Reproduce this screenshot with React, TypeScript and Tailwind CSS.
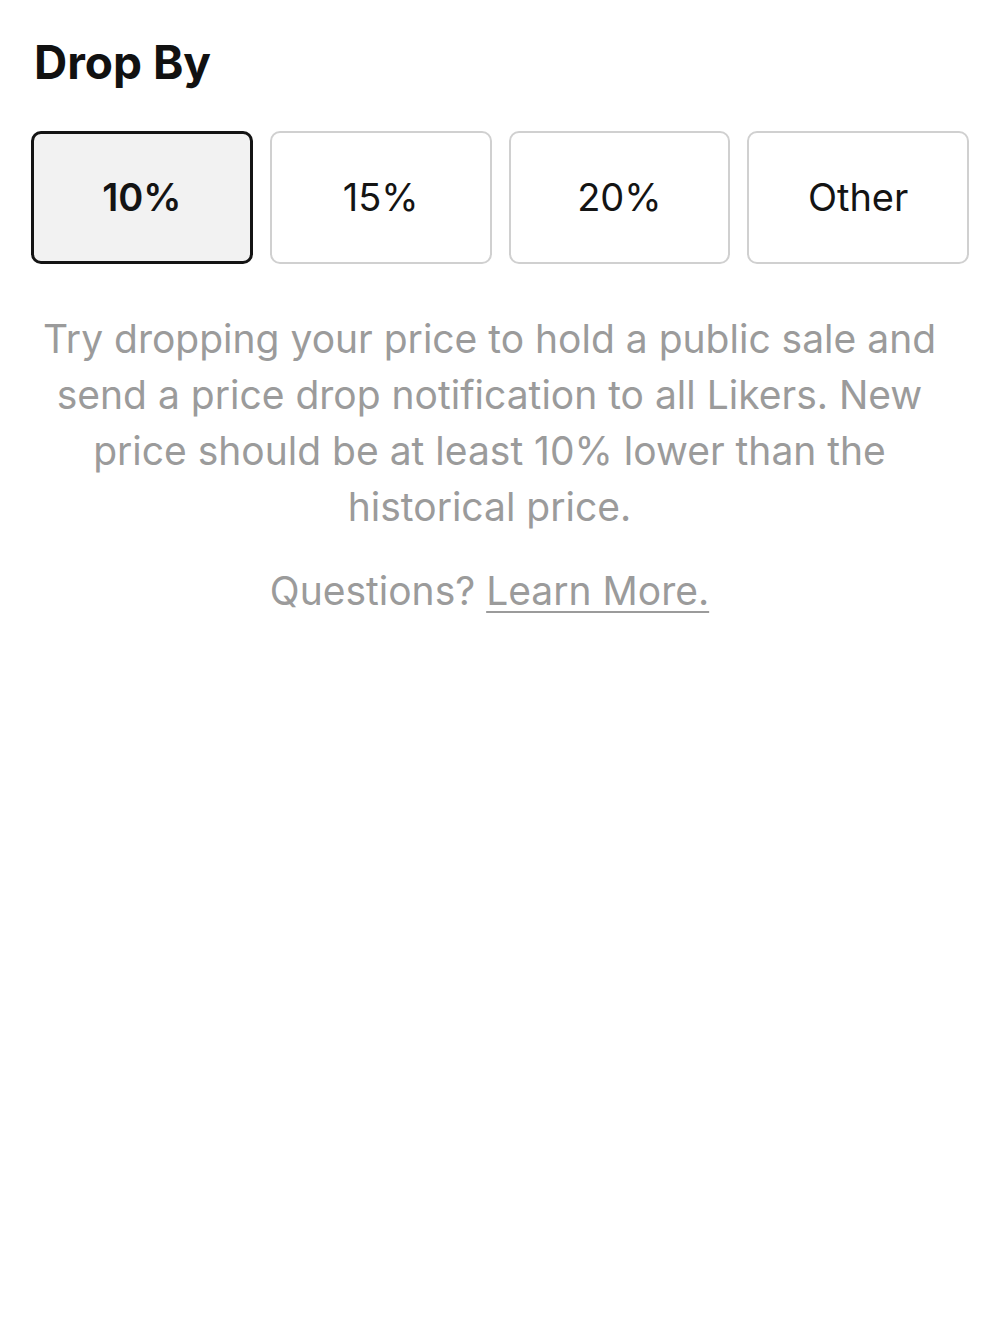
import React, { useState } from 'react';

const options = ['10%', '15%', '20%', 'Other'];

const App: React.FC = () => {
  const [selected, setSelected] = useState(0);

  return (
    <div className="min-h-screen bg-white font-['Inter',sans-serif] px-[31px] pt-[34px]">
      {/* Heading */}
      <h1 className="text-[46px] leading-[56px] font-bold text-[#111111] pl-[3px]">Drop By</h1>

      {/* Percentage options */}
      <div className="mt-[41px] grid grid-cols-4 gap-[17px]">
        {options.map((opt, i) => (
          <button
            key={opt}
            onClick={() => setSelected(i)}
            className={
              i === selected
                ? 'h-[133px] rounded-[10px] border-[3px] border-[#141414] bg-[#f2f2f2] text-[38px] font-semibold text-[#141414]'
                : 'h-[133px] rounded-[10px] border-2 border-[#d0d0d0] bg-white text-[38px] font-normal text-[#141414]'
            }
          >
            {opt}
          </button>
        ))}
      </div>

      {/* Description */}
      <div className="pr-[21px] text-center text-[39px] leading-[56px] text-[#9b9b9b]">
        <p className="mt-[47px]">
          Try dropping your price to hold a public sale and send a price drop notification to all Likers. New price
          should be at least 10% lower than the historical price.
        </p>
        <p className="mt-[28px]">
          Questions? <a className="underline underline-offset-[6px] decoration-2">Learn More.</a>
        </p>
      </div>
    </div>
  );
};

export default App;
